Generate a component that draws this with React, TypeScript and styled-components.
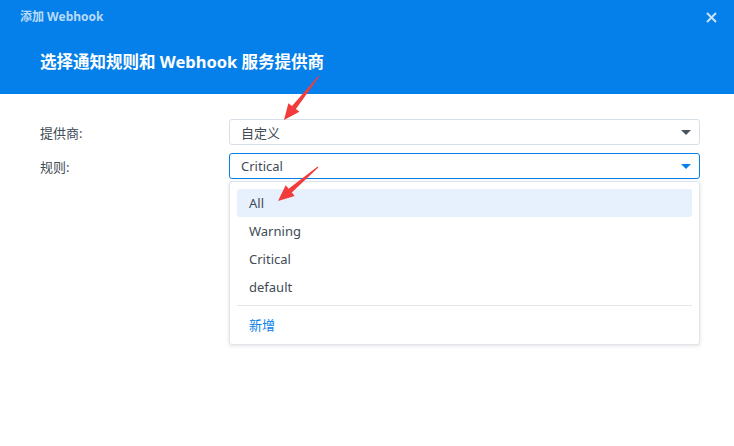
import styled, { createGlobalStyle } from "styled-components"

const GlobalStyle = createGlobalStyle`
  html, body {
    margin: 0;
    padding: 0;
    background: #fff;
  }
  body {
    font-family: "Noto Sans", "Noto Sans CJK SC", sans-serif;
    color: #414b55;
  }
`

const blue = "#0580ea"

const Dialog = styled.div`
  position: relative;
  width: 734px;
  height: 446px;
  display: flex;
  flex-direction: column;
  background: #fff;
  overflow: hidden;
`

const Header = styled.header`
  height: 94px;
  box-sizing: border-box;
  background: ${blue};
  display: flex;
  flex-direction: column;
`

const TopBar = styled.div`
  height: 34px;
  display: flex;
  align-items: center;
  justify-content: space-between;
  padding: 0 16px 0 20px;
`

const SmallTitle = styled.div`
  font-size: 12px;
  font-weight: 700;
  color: rgba(255, 255, 255, 0.72);
  line-height: 14px;
`

const CloseButton = styled.button`
  border: 0;
  background: none;
  padding: 0;
  width: 14px;
  height: 14px;
  display: flex;
  align-items: center;
  justify-content: center;
  cursor: pointer;
`

const Heading = styled.h1`
  margin: 17px 0 0 40px;
  font-size: 16.5px;
  line-height: 22px;
  font-weight: 700;
  color: #fff;
`

const Body = styled.div`
  padding: 25px 34px 0 40px;
  display: flex;
  flex-direction: column;
  gap: 8px;
`

const Row = styled.div`
  display: grid;
  grid-template-columns: 189px 1fr;
  align-items: center;
`

const Label = styled.label`
  font-size: 13px;
  color: #414b55;
`

const Field = styled.div`
  position: relative;
`

const Select = styled.div<{ $open?: boolean }>`
  height: 26px;
  box-sizing: border-box;
  border: 1px solid ${(p) => (p.$open ? blue : "#d6dfe8")};
  border-radius: 3px;
  display: flex;
  align-items: center;
  justify-content: space-between;
  padding: 0 8px 0 11px;
  font-size: 13px;
  color: #414b55;
`

const Caret = styled.span<{ $open?: boolean }>`
  width: 0;
  height: 0;
  border-left: 5px solid transparent;
  border-right: 5px solid transparent;
  border-top: 5px solid ${(p) => (p.$open ? blue : "#4a545e")};
`

const Menu = styled.div`
  position: absolute;
  top: 28px;
  left: 0;
  right: 0;
  box-sizing: border-box;
  border: 1px solid #dfe5eb;
  border-radius: 3px;
  background: #fff;
  box-shadow: 0 1px 4px rgba(0, 0, 0, 0.12);
  padding: 7px 7px 6px;
`

const Item = styled.div<{ $active?: boolean; $link?: boolean }>`
  height: 28px;
  display: flex;
  align-items: center;
  padding-left: 12px;
  border-radius: 3px;
  font-size: 13px;
  background: ${(p) => (p.$active ? "#e6f1fd" : "transparent")};
  color: ${(p) => (p.$link ? blue : "#414b55")};
`

const Divider = styled.div`
  height: 1px;
  background: #e3e7eb;
  margin: 4px 0;
`

const Annotations = styled.svg`
  position: absolute;
  left: 0;
  top: 0;
  pointer-events: none;
`

const rules = ["All", "Warning", "Critical", "default"]

export default function App() {
  return (
    <>
      <GlobalStyle />
      <Dialog>
        <Header>
          <TopBar>
            <SmallTitle>添加 Webhook</SmallTitle>
            <CloseButton aria-label="关闭">
              <svg width="11" height="11" viewBox="0 0 11 11">
                <path
                  d="M1 1L10 10M10 1L1 10"
                  stroke="rgba(255,255,255,0.78)"
                  strokeWidth="2"
                />
              </svg>
            </CloseButton>
          </TopBar>
          <Heading>选择通知规则和 Webhook 服务提供商</Heading>
        </Header>

        <Body>
          <Row>
            <Label>提供商:</Label>
            <Select>
              <span>自定义</span>
              <Caret />
            </Select>
          </Row>
          <Row>
            <Label>规则:</Label>
            <Field>
              <Select $open>
                <span>Critical</span>
                <Caret $open />
              </Select>
              <Menu>
                {rules.map((r, i) => (
                  <Item key={r} $active={i === 0}>
                    {r}
                  </Item>
                ))}
                <Divider />
                <Item $link>新增</Item>
              </Menu>
            </Field>
          </Row>
        </Body>

        <Annotations width="734" height="446" viewBox="0 0 734 446">
          <polygon
            fill="#f23b3b"
            points="319.4,76.3 295.9,109.1 299.4,111.8 284,120 288.4,103.2 292,106 318.6,75.7"
          />
          <polygon
            fill="#f23b3b"
            points="318.3,167.4 291.8,192.5 294.7,195.9 278,201 285.7,185.3 288.6,188.7 317.7,166.6"
          />
        </Annotations>
      </Dialog>
    </>
  )
}
